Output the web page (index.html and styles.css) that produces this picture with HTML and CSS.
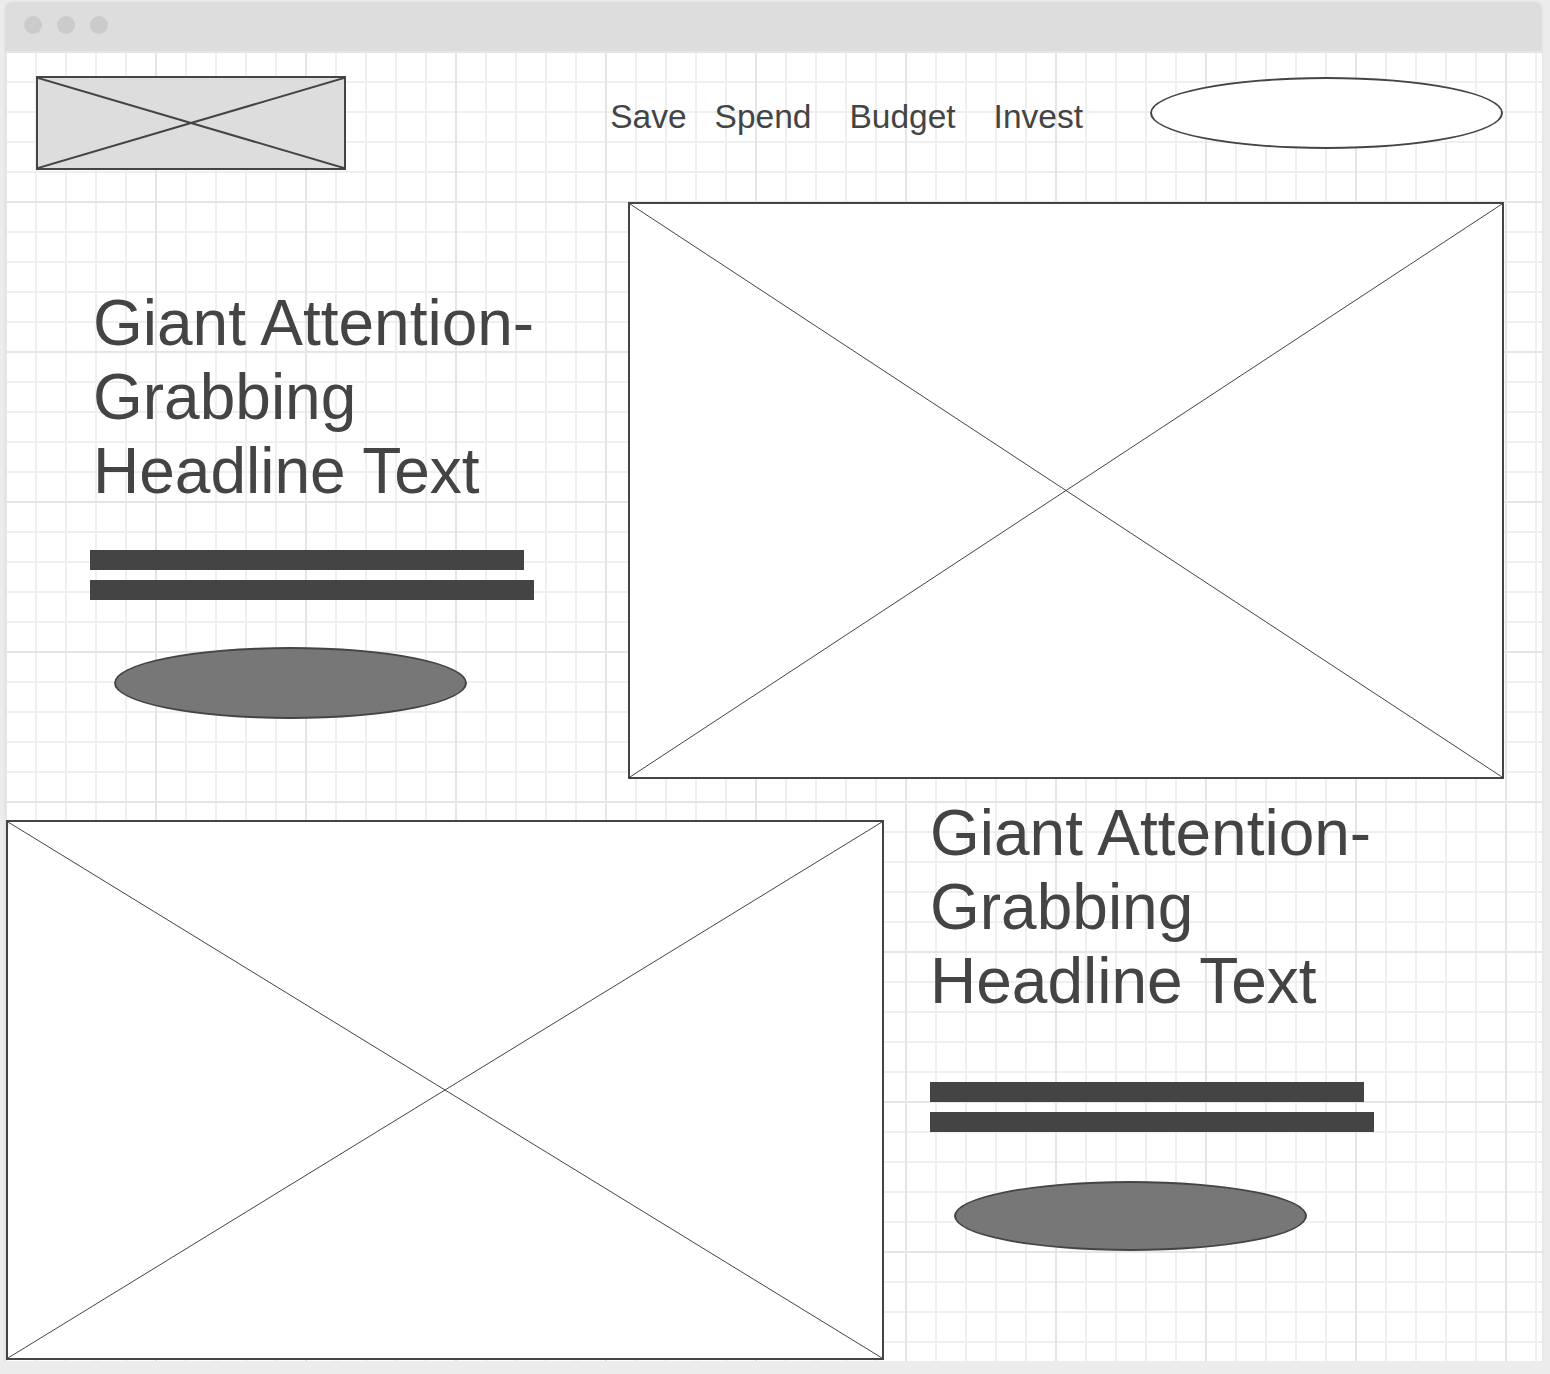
FILE: index.html
```html
<!DOCTYPE html>
<html lang="en">
<head>
    <meta charset="UTF-8">
    <meta name="viewport" content="width=device-width, initial-scale=1.0">
    <title>Wireframe</title>
    <link rel="stylesheet" href="styles.css">
</head>
<body>
    <div class="window">
        <div class="titlebar">
            <span class="dot"></span>
            <span class="dot"></span>
            <span class="dot"></span>
        </div>

        <div class="canvas">
            <header class="site-header">
                <div class="placeholder logo">
                    <svg class="cross" width="100%" height="100%">
                        <line x1="0" y1="0" x2="100%" y2="100%"/>
                        <line x1="0" y1="100%" x2="100%" y2="0"/>
                    </svg>
                </div>
                <nav class="main-nav">
                    <a href="#">Save</a>
                    <a href="#">Spend</a>
                    <a href="#" class="wide">Budget</a>
                    <a href="#" class="wide">Invest</a>
                </nav>
                <div class="search-pill"></div>
            </header>

            <section class="hero">
                <div class="copy hero-copy">
                    <h1>Giant Attention-Grabbing Headline Text</h1>
                    <div class="text-line short"></div>
                    <div class="text-line"></div>
                    <div class="cta"></div>
                </div>
                <div class="placeholder hero-image">
                    <svg class="cross" width="100%" height="100%">
                        <line x1="0" y1="0" x2="100%" y2="100%"/>
                        <line x1="0" y1="100%" x2="100%" y2="0"/>
                    </svg>
                </div>
            </section>

            <section class="feature">
                <div class="placeholder feature-image">
                    <svg class="cross" width="100%" height="100%">
                        <line x1="0" y1="0" x2="100%" y2="100%"/>
                        <line x1="0" y1="100%" x2="100%" y2="0"/>
                    </svg>
                </div>
                <div class="copy feature-copy">
                    <h1>Giant Attention-Grabbing Headline Text</h1>
                    <div class="text-line short"></div>
                    <div class="text-line"></div>
                    <div class="cta"></div>
                </div>
            </section>
        </div>
    </div>
</body>
</html>
```

FILE: styles.css
```css
body {
    margin: 0;
    background-color: #ececec;
    font-family: "Liberation Sans", Arial, sans-serif;
    color: #444;
}

.window {
    width: 1537px;
    margin: 2px 0 0 5px;
    box-shadow: 0 0 3px rgba(0, 0, 0, 0.08);
    border-radius: 8px 8px 0 0;
}

.titlebar {
    height: 49px;
    box-sizing: border-box;
    display: flex;
    gap: 15px;
    padding: 14px 0 0 19px;
    background-color: #dddddd;
    border-radius: 8px 8px 0 0;
}

.dot {
    width: 18px;
    height: 18px;
    border-radius: 50%;
    background-color: #cbcbcb;
}

/* grid paper */
.canvas {
    height: 1310px;
    overflow: hidden;
    background-color: #fff;
    background-image:
        linear-gradient(to right, #e5e5e5 2px, transparent 2px),
        linear-gradient(to bottom, #e5e5e5 2px, transparent 2px),
        linear-gradient(to right, #efefef 2px, transparent 2px),
        linear-gradient(to bottom, #efefef 2px, transparent 2px);
    background-size: 150px 150px, 150px 150px, 30px 30px, 30px 30px;
}

.placeholder {
    box-sizing: border-box;
    border: 2px solid #444;
    background-color: #fff;
}

.cross {
    display: block;
}

.cross line {
    stroke: #444;
    stroke-width: 1;
}

.site-header {
    height: 151px;
    box-sizing: border-box;
    display: flex;
    align-items: flex-start;
    padding: 25px 39px 0 31px;
}

.logo {
    width: 310px;
    height: 94px;
    background-color: #dddddd;
}

.logo .cross line {
    stroke-width: 2;
}

.main-nav {
    display: flex;
    margin-left: auto;
    margin-top: 21px;
}

.main-nav a {
    font-size: 33.5px;
    line-height: 40px;
    color: #444;
    text-decoration: none;
}

.main-nav a + a {
    margin-left: 28px;
}

.main-nav a.wide {
    margin-left: 38px;
}

.search-pill {
    width: 353px;
    height: 72px;
    margin: 1px 0 0 67px;
    box-sizing: border-box;
    border: 2px solid #444;
    border-radius: 50%;
    background-color: #fff;
}

.hero {
    display: flex;
    align-items: flex-start;
    padding-right: 38px;
}

.hero-copy {
    width: 623px;
    box-sizing: border-box;
    padding: 84px 0 0 85px;
}

.hero-image {
    width: 876px;
    height: 577px;
}

.copy h1 {
    width: 470px;
    margin: 0 0 42px;
    padding-left: 3px;
    font-size: 64px;
    line-height: 74px;
    font-weight: normal;
    color: #444;
}

.text-line {
    width: 444px;
    height: 20px;
    margin-bottom: 10px;
    background-color: #444;
}

.text-line.short {
    width: 434px;
}

.cta {
    width: 353px;
    height: 72px;
    margin: 47px 0 0 24px;
    box-sizing: border-box;
    border: 2px solid #444;
    border-radius: 50%;
    background-color: #777;
}

.feature {
    display: flex;
    align-items: flex-start;
    margin-top: 17px;
}

.feature-image {
    width: 878px;
    height: 540px;
    margin: 24px 0 0 1px;
}

.feature-copy {
    margin-left: 46px;
}

.feature-copy h1 {
    margin-bottom: 64px;
    padding-left: 0;
}

.feature-copy .cta {
    height: 70px;
    margin-top: 49px;
}
```
